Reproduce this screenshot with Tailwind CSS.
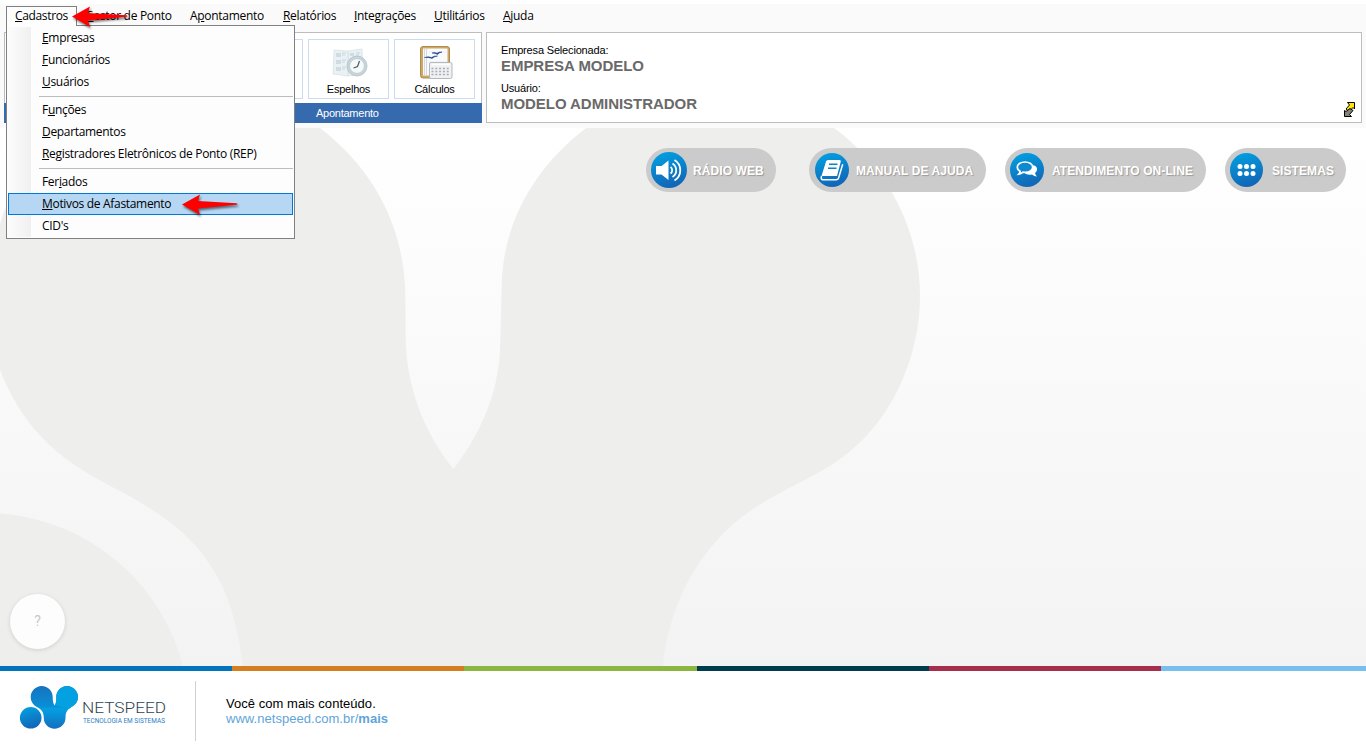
<!DOCTYPE html>
<html lang="pt-BR">
<head>
    <meta charset="UTF-8">
    <meta name="viewport" content="width=device-width, initial-scale=1.0">
    <title>Netspeed - Gestor de Ponto</title>
    <script src="https://cdn.jsdelivr.net/npm/@tailwindcss/browser@4"></script>
</head>
<body class="relative flex flex-col w-[1366px] h-[747px] overflow-hidden bg-white text-black font-['Liberation_Sans',Arial,sans-serif]">
    <!-- Menu bar -->
    <nav class="mt-1 h-7 shrink-0 bg-[#fafafa] flex pl-[15px] leading-6 text-[12px] tracking-[-0.3px] font-['Open_Sans',sans-serif] whitespace-nowrap">
        <span class="w-[70px]"></span>
        <span class="w-[105px]"><u>G</u>estor de Ponto</span>
        <span class="w-[93px]">A<u>p</u>ontamento</span>
        <span class="w-[71px]"><u>R</u>elatórios</span>
        <span class="w-20"><u>I</u>ntegrações</span>
        <span class="w-[69px]"><u>U</u>tilitários</span>
        <span><u>A</u>juda</span>
    </nav>

    <!-- Toolbar -->
    <header class="h-24 shrink-0 bg-[#fafafa] flex gap-1 pl-1 pr-1 pb-[5px]">
        <section class="w-[478px] h-[91px] border border-[#bdbdbd] bg-white flex flex-col">
            <div class="h-[70px] shrink-0 flex justify-end gap-[5px] pt-[6px] pr-[6px]">
                <div class="w-[81px] h-[60px] border border-[#ccdbee]"></div>
                <button class="w-[81px] h-[60px] border border-[#ccdbee] flex flex-col items-center text-[11px] tracking-[-0.25px]">
                    <svg class="mt-1 shrink-0" width="40" height="38" viewBox="328 44 40 38">
                        <path d="M333 50 L347 51 L361 49 L362 74 L347 76 L332 74Z" fill="#e9f1f4" stroke="#d5e0e4" stroke-width=".7"/>
                        <path d="M347 51V76" stroke="#d2dde1"/>
                        <path d="M335 53h5v4h-5zM335 60h5v4h-5zM335 67h5v4h-5zM349 53h4v3h-4z" fill="#cfdce2"/>
                        <path d="M341 53h4M341 55h3M341 60h4M341 62h3M341 67h4M341 69h3M355 53h4M355 55h3" stroke="#c8d6dc"/>
                        <circle cx="356" cy="66" r="10" fill="#c6d5db" stroke="#b2c0c6" stroke-width=".8"/>
                        <circle cx="356" cy="66" r="7.3" fill="#f4f9fa" stroke="#b9c7cd" stroke-width=".6"/>
                        <path d="M358.500 61l-2 5.500-4 1.500" fill="none" stroke="#4e5a60" stroke-width="1.200"/>
                    </svg>
                    <span class="leading-4 -mt-px">Espelhos</span>
                </button>
                <button class="w-[81px] h-[60px] border border-[#ccdbee] flex flex-col items-center text-[11px] tracking-[-0.25px]">
                    <svg class="mt-1 shrink-0" width="40" height="38" viewBox="415 44 40 38">
                        <rect x="420.500" y="46.500" width="29" height="31.500" rx="2.500" fill="#cda865" stroke="#b08c4c"/>
                        <path d="M423 48.500h24.500v27H423z" fill="#f8fafb"/>
                        <path d="M424.500 49V75M426.500 49V75" stroke="#c9d0d6" stroke-width=".8"/>
                        <path d="M429 52h17M429 62h17" stroke="#e3e8ec" stroke-width=".7"/>
                        <path d="M424.500 57.500q4-1.500 7 0q2.500-2 6-1.500q-3.500.5-5.500 2.500q-3-1.500-7.500-1zM432 53q3-1 5 .3q2-1.700 5-1.300q-3 .5-4.500 2.500q-2-1.500-5.500-1.500z" fill="#1d3f8e" stroke="#1d3f8e" stroke-width=".5"/>
                        <rect x="429.500" y="62.500" width="22.500" height="16" rx="1.500" fill="#f0f1f4" stroke="#aeb1b8" stroke-width=".9"/>
                        <path d="M431.500 64.500h18.500" stroke="#fff" stroke-width="1.500"/>
                        <path d="M431.500 68.500h19M431.500 71.500h19M431.500 74.500h19" stroke="#a9acb4" stroke-width="1.300" stroke-dasharray="2 1.800"/>
                    </svg>
                    <span class="leading-4 -mt-px">Cálculos</span>
                </button>
            </div>
            <div class="-mx-px -mb-px h-5 shrink-0 bg-[#356aae] text-white text-[11px] leading-5 pl-[312px] tracking-[-0.25px]">Apontamento</div>
        </section>
        <section class="flex-1 h-[91px] border border-[#bdbdbd] bg-white relative pl-[14px] pt-[11px]">
            <p class="text-[11px] leading-[13px] tracking-[-0.17px]">Empresa Selecionada:</p>
            <p class="text-[15px] leading-[18px] font-bold text-[#696969] tracking-[-0.05px]">EMPRESA MODELO</p>
            <p class="text-[11px] leading-[13px] mt-[7px] tracking-[-0.17px]">Usuário:</p>
            <p class="text-[15px] leading-[18px] font-bold text-[#696969] tracking-[-0.05px]">MODELO ADMINISTRADOR</p>
            <svg class="absolute right-[5px] bottom-1" width="12" height="16" viewBox="0 0 12 16">
                <path d="M3.500 .500h7v6.500l-1.500-1.500-4 4-3-2.500 3.500-4z" fill="#ffe600" stroke="#000"/>
                <path d="M7.500 14.500H.500V8.500l1.500 1 4-3 3 2-3.500 4z" fill="#85827a" stroke="#000"/>
            </svg>
        </section>
    </header>

    <!-- Desktop area -->
    <main class="relative h-[538px] shrink-0 bg-gradient-to-b from-white to-[#f3f3f3]">
        <svg class="absolute inset-0" width="1366" height="538" viewBox="0 128 1366 538" fill="#eeeeec">
            <path d="M0 224 C12 184 32 152 60 128 H320 C375 170 403 228 405 288 C406 308 405 326 406 346 C408 390 425 434 453.500 469 C480 434 498 395 500 350 C501 325 501 300 502 278 C505 220 536 166 586 128 H834 C888 168 920 230 920 296 C920 352 896 410 857 445 C817 482 778 486 732 525 C692 561 668 612 663 666 H243 C239 636 232 604 219 580 C196 535 158 512 124 493 C80 470 30 446 0 370Z"/>
            <circle cx="-14.600" cy="717" r="204"/>
        </svg>
        <div class="relative flex justify-end pt-5 pr-5 text-white text-[12px] tracking-[0.08px] font-bold whitespace-nowrap">
            <svg width="0" height="0" class="absolute">
                <defs>
                    <linearGradient id="blue" x1="0" y1="0" x2=".3" y2="1">
                        <stop offset="0" stop-color="#00a4e4"/>
                        <stop offset="1" stop-color="#1268b8"/>
                    </linearGradient>
                </defs>
            </svg>
            <a class="w-[130px] h-11 mr-[33px] rounded-full bg-[#cbcbcb] flex items-center pl-[5px]">
                <svg width="36" height="36" viewBox="0 0 36 36">
                    <circle cx="18" cy="18" r="18" fill="url(#blue)"/>
                    <path d="M5 14h5.500l7-5.500v19.500l-7-5.500H5z" fill="#fff"/>
                    <path d="M19.500 15a4 4 0 0 1 0 6.500M21.500 11.500a8 8 0 0 1 0 13.500M23.500 8a12 12 0 0 1 0 20.500" fill="none" stroke="#fff" stroke-width="1.800"/>
                </svg>
                <span class="ml-[6px] mt-px text-shadow-[1px_1px_1px_#999]">RÁDIO WEB</span>
            </a>
            <a class="w-[177px] h-11 mr-[19px] rounded-full bg-[#cbcbcb] flex items-center pl-[6px]">
                <svg width="34" height="34" viewBox="0 0 34 34">
                    <circle cx="17" cy="17" r="17" fill="url(#blue)"/>
                    <path d="M13 7h11.500q1.700 0 1.300 1.500L22 23H6.500l4.500-14.500Q11.500 7 13 7z" fill="#fff"/>
                    <path d="M6.500 23q-1 3.800 1.500 3.800H21q2 0 2.500-1.500l4.200-14" fill="none" stroke="#fff" stroke-width="1.500"/>
                    <path d="M14 11.200h8.500M13 15.200h8.500" stroke="#0a84cd" stroke-width="1.500"/>
                </svg>
                <span class="ml-[7px] mt-px text-shadow-[1px_1px_1px_#999]">MANUAL DE AJUDA</span>
            </a>
            <a class="w-[201px] h-11 mr-[19px] rounded-full bg-[#cbcbcb] flex items-center pl-[5px]">
                <svg width="34" height="34" viewBox="0 0 34 34">
                    <circle cx="17" cy="17" r="17" fill="url(#blue)"/>
                    <path d="M23.500 12q4 1.500 3.500 5-.5 2-2 3 .5 2 2 3.500-3 0-5-2-5 1-8-2 8 0 9.500-7.500z" fill="#fff"/>
                    <path d="M15 9c4.500 0 7.700 2.300 7.700 5.200S19.500 19.400 15 19.400l-2-.2q-1.800 1.800-4.200 2 1.300-1.300 1.300-3Q7.300 16.600 7.300 14.200C7.300 11.300 10.500 9 15 9z" fill="#0f89cf" stroke="#fff" stroke-width="1.700"/>
                </svg>
                <span class="ml-2 mt-px text-shadow-[1px_1px_1px_#999]">ATENDIMENTO ON-LINE</span>
            </a>
            <a class="w-[121px] h-11 rounded-full bg-[#cbcbcb] flex items-center pl-[5px]">
                <svg width="33" height="34" viewBox="0 0 33 34">
                    <ellipse cx="16.500" cy="17" rx="16.500" ry="17" fill="url(#blue)"/>
                    <g fill="#fff">
                        <circle cx="10" cy="13.500" r="2.500"/><circle cx="16.500" cy="13.500" r="2.500"/><circle cx="23" cy="13.500" r="2.500"/>
                        <circle cx="10" cy="20.500" r="2.500"/><circle cx="16.500" cy="20.500" r="2.500"/><circle cx="23" cy="20.500" r="2.500"/>
                    </g>
                </svg>
                <span class="ml-[9px] mt-px text-shadow-[1px_1px_1px_#999]">SISTEMAS</span>
            </a>
        </div>
        <button class="absolute left-[10px] bottom-[17px] size-[55px] rounded-full bg-[#fdfdfd] shadow-[0_1px_4px_#0002] text-[#c8c8c8] text-[14px] font-['Roboto',sans-serif]">?</button>
    </main>

    <!-- Colour stripe -->
    <div class="h-[5px] shrink-0 flex">
        <div class="w-[232px] bg-[#0075bd]"></div>
        <div class="w-[232px] bg-[#d57e20]"></div>
        <div class="w-[233px] bg-[#8cb63f]"></div>
        <div class="w-[232px] bg-[#003c4c]"></div>
        <div class="w-[232px] bg-[#a72e4b]"></div>
        <div class="flex-1 bg-[#78bfef]"></div>
    </div>

    <!-- Footer -->
    <footer class="flex-1 flex pt-[10px]">
        <div class="w-[196px] h-[60px] border-r border-[#d0d0d0]">
            <svg width="195" height="60" viewBox="0 681 195 60">
                <defs>
                    <linearGradient id="stem" x1="0" y1="0" x2="0" y2="1">
                        <stop offset="0" stop-color="#1672bf"/>
                        <stop offset=".48" stop-color="#0a8ed6"/>
                        <stop offset=".53" stop-color="#03a0e2"/>
                        <stop offset="1" stop-color="#146fbe"/>
                    </linearGradient>
                </defs>
                <circle cx="30.700" cy="717.800" r="10.800" fill="url(#blue)"/>
                <path d="M41.700 686C48 686 52.700 691 52.700 697C52.700 700.500 53 703.500 54.700 705.500C56.200 703.500 56.300 700.500 56.300 697C56.300 691 61 686 67 686C73 686 78 691 78 697C78 701 76 704 73 706C68 709 65.500 711 65.500 718C65.500 724 60.500 728.700 54.500 728.700C48.500 728.700 43.800 724 43.800 718C43.800 711 41 709.500 36 706.500C33 704.500 30.700 701 30.700 697C30.700 691 35.700 686 41.700 686Z" fill="url(#stem)"/>
                <path d="M67 686C73 686 78 691 78 697C78 701 76 704 73 706Q71 707.300 69.500 708.500L54.700 705.500C56.200 703.500 56.300 700.500 56.300 697C56.300 691 61 686 67 686Z" fill="#03a0e2"/>
                <text x="82" y="713" textLength="84" lengthAdjust="spacingAndGlyphs" font-family="Roboto" font-weight="300" font-size="15.500" fill="#2e4350">NETSPEED</text>
                <text x="83" y="723" textLength="82" lengthAdjust="spacingAndGlyphs" font-family="Roboto" font-size="7" fill="#2b80c4">TECNOLOGIA EM SISTEMAS</text>
            </svg>
        </div>
        <div class="pl-[30px] pt-[15px] text-[13px] leading-[15px] tracking-[0.04px]">
            <p>Você com mais conteúdo.</p>
            <p class="text-[#5fa5da]">www.netspeed.com.br/<b>mais</b></p>
        </div>
    </footer>

    <!-- Open menu -->
    <div class="absolute left-[6px] top-[25px] w-[289px] h-[214px] border border-[#808080] bg-[#fdfdfd] text-[12px] leading-[22px] tracking-[-0.32px] pt-px font-['Open_Sans',sans-serif] whitespace-nowrap">
        <div class="absolute left-px top-px bottom-px w-[23px] bg-gradient-to-r from-[#fcfcfc] to-[#f0f0f0]"></div>
        <div class="relative">
            <p class="pl-[35px]"><u>E</u>mpresas</p>
            <p class="pl-[35px]"><u>F</u>uncionários</p>
            <p class="pl-[35px]"><u>U</u>suários</p>
            <hr class="mt-[3px] mb-[2px] ml-8 mr-px border-[#bdbdbd]">
            <p class="pl-[35px]">F<u>u</u>nções</p>
            <p class="pl-[35px]"><u>D</u>epartamentos</p>
            <p class="pl-[35px]"><u>R</u>egistradores Eletrônicos de Ponto (REP)</p>
            <hr class="mt-[3px] mb-[2px] ml-8 mr-px border-[#bdbdbd]">
            <p class="pl-[35px]">Fer<u>i</u>ados</p>
            <p class="ml-px mr-px pl-[33px] h-[22px] leading-5 border border-[#0078d7] bg-[#b5d7f3]"><u>M</u>otivos de Afastamento</p>
            <p class="pl-[35px]">CID's</p>
        </div>
    </div>
    <div class="absolute left-[6px] top-[6px] w-[71px] h-5 border border-b-0 border-[#808080] bg-[#fdfdfd] pl-2 leading-[18px] text-[12px] font-['Open_Sans',sans-serif] tracking-[-0.35px]"><u>C</u>adastros</div>

    <!-- Pointer arrows -->
    <svg class="absolute left-[70px] top-1 drop-shadow-[1px_2px_1px_#0008]" width="62" height="26" viewBox="0 0 62 26">
        <path d="M2 12.500L20 2.500l-2 6.500 38.500 2.200q2 .8 0 1.600L18 16.500l2 6.500z" fill="#fe0000"/>
    </svg>
    <svg class="absolute left-[180px] top-[192px] drop-shadow-[1px_2px_1px_#0008]" width="62" height="26" viewBox="0 0 62 26">
        <path d="M2 12.500L20 2.500l-2 6.500 38.500 2.200q2 .8 0 1.600L18 16.500l2 6.500z" fill="#fe0000"/>
    </svg>
</body>
</html>
